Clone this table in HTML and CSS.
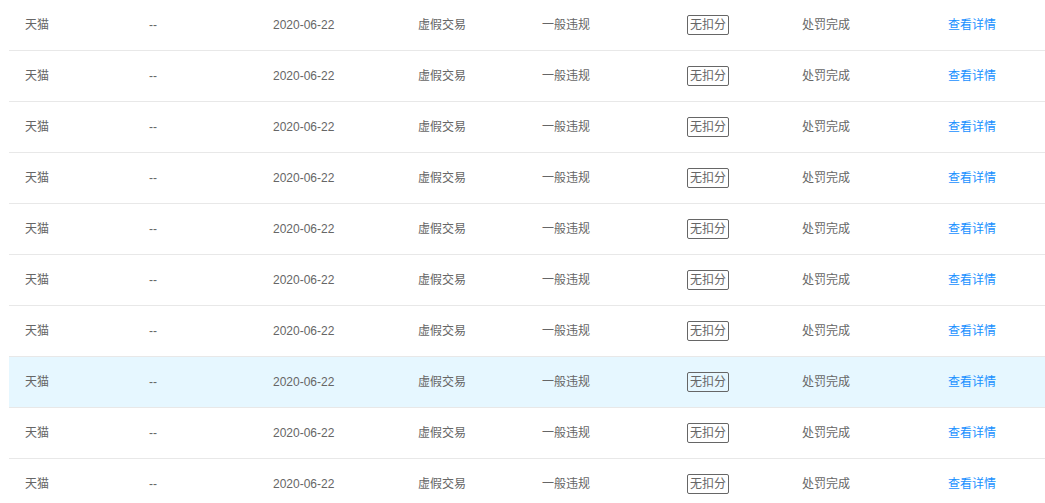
FILE: index.html
```html
<!DOCTYPE html>
<html lang="zh-CN">

<head>
    <meta charset="UTF-8">
    <meta name="viewport" content="width=device-width, initial-scale=1.0">
    <title>处罚记录</title>
    <link rel="stylesheet" href="styles.css">
</head>

<body>
    <div class="wrap">
        <table class="record-table">
            <colgroup>
                <col class="c-shop">
                <col class="c-id">
                <col class="c-date">
                <col class="c-type">
                <col class="c-level">
                <col class="c-score">
                <col class="c-status">
                <col class="c-op">
            </colgroup>
            <tbody id="rows"></tbody>
        </table>
    </div>
    <script>
        var rows = document.getElementById('rows');
        var html = '';
        for (var i = 0; i < 10; i++) {
            html += '<tr' + (i === 7 ? ' class="active"' : '') + '>' +
                '<td>天猫</td>' +
                '<td>--</td>' +
                '<td>2020-06-22</td>' +
                '<td>虚假交易</td>' +
                '<td>一般违规</td>' +
                '<td><span class="tag">无扣分</span></td>' +
                '<td>处罚完成</td>' +
                '<td><a class="link" href="#">查看详情</a></td>' +
                '</tr>';
        }
        rows.innerHTML = html;
    </script>
</body>

</html>
```

FILE: styles.css
```css
body {
    margin: 0;
    background: #fff;
    font-family: "Liberation Sans", "Noto Sans CJK SC", sans-serif;
    font-size: 12px;
    color: #666;
}

.wrap {
    padding-left: 9px;
}

.record-table {
    width: 1036px;
    margin-top: -1px;
    border-collapse: collapse;
    table-layout: fixed;
}

.c-shop { width: 124px; }
.c-id { width: 124px; }
.c-date { width: 145px; }
.c-type { width: 124px; }
.c-level { width: 145px; }
.c-score { width: 115px; }
.c-status { width: 146px; }
.c-op { width: 113px; }

.record-table td {
    height: 51px;
    padding: 1px 0 0 16px;
    border-bottom: 1px solid #e8e8e8;
    line-height: 16px;
    vertical-align: middle;
    white-space: nowrap;
    box-sizing: border-box;
}

.record-table tr.active td {
    background: #e6f7ff;
}

.tag {
    display: inline-block;
    border: 1px solid #666;
    border-radius: 2px;
    padding: 1px 2px;
    line-height: 16px;
    color: #666;
}

.link {
    color: #1890ff;
    text-decoration: none;
}
```
